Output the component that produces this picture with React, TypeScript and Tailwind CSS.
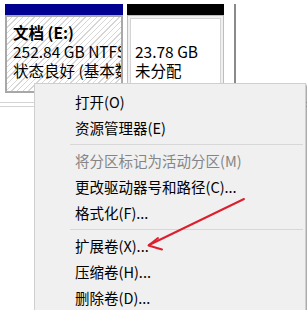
import React from 'react';

type Item = { label: string; disabled?: boolean } | 'sep';

const MENU: Item[] = [
  { label: '打开(O)' },
  { label: '资源管理器(E)' },
  'sep',
  { label: '将分区标记为活动分区(M)', disabled: true },
  { label: '更改驱动器号和路径(C)...' },
  { label: '格式化(F)...' },
  'sep',
  { label: '扩展卷(X)...' },
  { label: '压缩卷(H)...' },
  { label: '删除卷(D)...' },
];

const App: React.FC = () => {
  return (
    <div className="relative w-[307px] h-[310px] overflow-hidden bg-white text-black font-['Noto_Sans_CJK_SC',sans-serif]">
      {/* Disk row */}
      <div className="flex h-[102px] pt-[4px] pl-[5px]">
        {/* Selected partition */}
        <div className="flex flex-col w-[118px]">
          <div className="h-[11px] bg-[#000090]" />
          <div className="h-[78px] border-2 border-[#a8a8a8] bg-[repeating-linear-gradient(135deg,#ffffff_0,#ffffff_3px,#d6d6d6_3px,#d6d6d6_4px)] pl-[6px] pt-[6px] text-[15.5px] leading-[19px] whitespace-nowrap overflow-hidden">
            <div className="font-bold">文档 (E:)</div>
            <div>252.84 GB NTFS</div>
            <div>状态良好 (基本数据分区)</div>
          </div>
        </div>

        {/* Unallocated */}
        <div className="flex flex-col w-[97px] ml-[4px]">
          <div className="h-[11px] bg-black" />
          <div className="h-[78px] border border-[#bdbdbd] bg-[#f0f0f0] p-[2px]">
            <div className="h-full border border-[#d4d4d4] bg-white pl-[4px] pt-[23px] text-[15.5px] leading-[19px] whitespace-nowrap overflow-hidden">
              <div>23.78 GB</div>
              <div>未分配</div>
            </div>
          </div>
        </div>

        <div className="ml-[10px] w-[2px] bg-[#8a8a8a]" />
      </div>
      <div className="h-[5px] border-y border-[#d4d4d4]" />

      {/* Context menu */}
      <div className="absolute left-[34px] top-[83px] w-[272px] h-[240px] border border-[#cfcfcf] bg-[#f0f0f0] shadow-[2px_2px_2px_rgba(0,0,0,0.35)] pt-[5px]">
        {MENU.map((item, i) =>
          item === 'sep' ? (
            <div key={i} className="h-[7px] flex items-center ml-[35px] mr-[2px]">
              <div className="h-px w-full bg-[#d7d7d7]" />
            </div>
          ) : (
            <div
              key={i}
              className={`h-[26px] flex items-center pl-[40px] text-[14.5px] whitespace-nowrap ${
                item.disabled ? 'text-[#858585]' : 'text-black'
              }`}
            >
              {item.label}
            </div>
          )
        )}
      </div>

      {/* Red arrow */}
      <svg className="absolute left-0 top-0" width="307" height="310" viewBox="0 0 307 310">
        <g stroke="#dd1f2d" strokeWidth="2" fill="none" strokeLinecap="round" strokeLinejoin="round">
          <path d="M244 199 L149 245" />
          <path d="M158 238 L148.5 245.5 L162 249.5" />
        </g>
      </svg>
    </div>
  );
};

export default App;
